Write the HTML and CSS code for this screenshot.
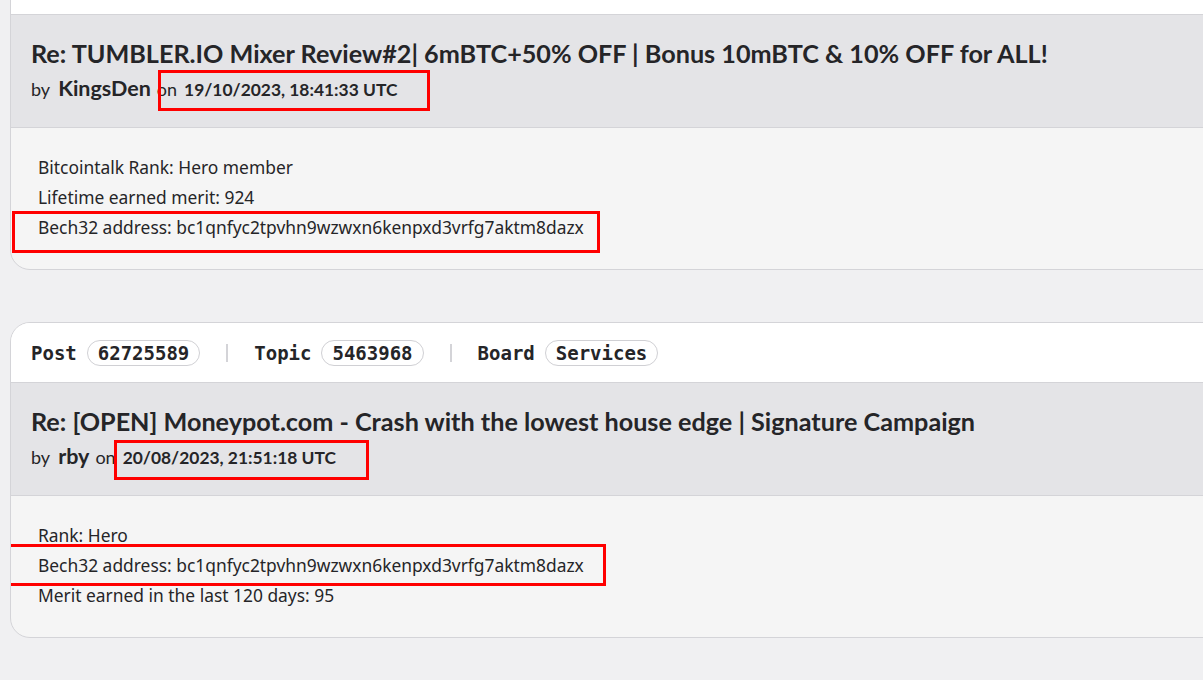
FILE: index.html
```html
<!DOCTYPE html>
<html>
<head>
    <title>Post history</title>
    <link rel="stylesheet" href="styles.css">
</head>
<body>
    <div class="posts">

        <!-- first post is scrolled so that its id row is above the window -->
        <div class="post">
            <div class="post-meta"></div>
            <div class="post-head">
                <h2 class="post-title">Re: TUMBLER.IO Mixer Review#2| 6mBTC+50% OFF | Bonus 10mBTC &amp; 10% OFF for ALL!</h2>
                <div class="post-by">
                    <span class="by-word">by</span><span class="author">KingsDen</span><span class="by-word">on</span><span class="post-date">19/10/2023, 18:41:33 UTC</span>
                </div>
                <div class="mark mark-date-1"></div>
            </div>
            <div class="post-body">
                <div>Bitcointalk Rank: Hero member</div>
                <div>Lifetime earned merit: 924</div>
                <div>Bech32 address: bc1qnfyc2tpvhn9wzwxn6kenpxd3vrfg7aktm8dazx</div>
                <div class="mark mark-addr-1"></div>
            </div>
        </div>

        <div class="post">
            <div class="post-meta">
                <span class="meta-label">Post</span> <span class="pill">62725589</span>
                <span class="meta-sep"></span>
                <span class="meta-label">Topic</span> <span class="pill">5463968</span>
                <span class="meta-sep"></span>
                <span class="meta-label">Board</span> <span class="pill">Services</span>
            </div>
            <div class="post-head">
                <h2 class="post-title">Re: [OPEN] Moneypot.com - Crash with the lowest house edge | Signature Campaign</h2>
                <div class="post-by">
                    <span class="by-word">by</span><span class="author">rby</span><span class="by-word">on</span><span class="post-date">20/08/2023, 21:51:18 UTC</span>
                </div>
                <div class="mark mark-date-2"></div>
            </div>
            <div class="post-body">
                <div>Rank: Hero</div>
                <div>Bech32 address: bc1qnfyc2tpvhn9wzwxn6kenpxd3vrfg7aktm8dazx</div>
                <div>Merit earned in the last 120 days: 95</div>
                <div class="mark mark-addr-2"></div>
            </div>
        </div>

    </div>
</body>
</html>
```

FILE: styles.css
```css
html {
    overflow: hidden;
}

body {
    margin: 0;
    background-color: #f0f0f2;
    font-family: Lato, "Noto Sans", sans-serif;
    color: #252528;
}

.posts {
    margin-top: -46px;
    margin-left: 10px;
    margin-right: -40px;
}

.post {
    background-color: #f5f5f5;
    border: 1px solid #d4d4d8;
    border-radius: 20px;
    overflow: hidden;
    margin-bottom: 52px;
}

/* top row with post / topic / board ids */
.post-meta {
    background-color: #fff;
    height: 59px;
    padding: 0 20px;
    display: flex;
    align-items: center;
    font-family: "DejaVu Sans Mono", monospace;
    font-weight: bold;
    font-size: 19px;
}

.meta-label {
    margin-right: 10px;
}

.pill {
    border: 1px solid #d0d0d4;
    border-radius: 14px;
    padding: 0 10px;
    line-height: 24px;
}

.meta-sep {
    width: 2px;
    height: 18px;
    background-color: #d4d4d8;
    margin: 0 26px;
}

.post-head {
    position: relative;
    background-color: #e4e4e7;
    border-top: 1px solid #d4d4d8;
    border-bottom: 1px solid #d4d4d8;
    padding: 20px 20px 22px;
}

.post-title {
    margin: 0 0 2px;
    font-size: 25.2px;
    line-height: 36px;
    font-weight: bold;
}

.post-by {
    line-height: 30px;
}

.by-word {
    font-size: 18px;
}

.author {
    font-size: 21.5px;
    font-weight: bold;
    margin: 0 6px 0 8px;
}

.post-date {
    font-size: 17.4px;
    font-weight: bold;
    margin-left: 7px;
}

.post-body {
    position: relative;
    padding: 24px 27px 27px;
    font-family: "Noto Sans", sans-serif;
    font-size: 17.4px;
    line-height: 30px;
}

/* red highlight boxes drawn over the screenshot */
.mark {
    position: absolute;
    border: 3px solid #f00;
    box-sizing: border-box;
}

.mark-date-1 {
    left: 147px;
    top: 55px;
    width: 272px;
    height: 41px;
}

.mark-date-2 {
    left: 103px;
    top: 57px;
    width: 255px;
    height: 40px;
}

.mark-addr-1 {
    left: 1px;
    top: 83px;
    width: 588px;
    height: 42px;
}

.mark-addr-2 {
    left: -6px;
    top: 48px;
    width: 601px;
    height: 42px;
}
```
